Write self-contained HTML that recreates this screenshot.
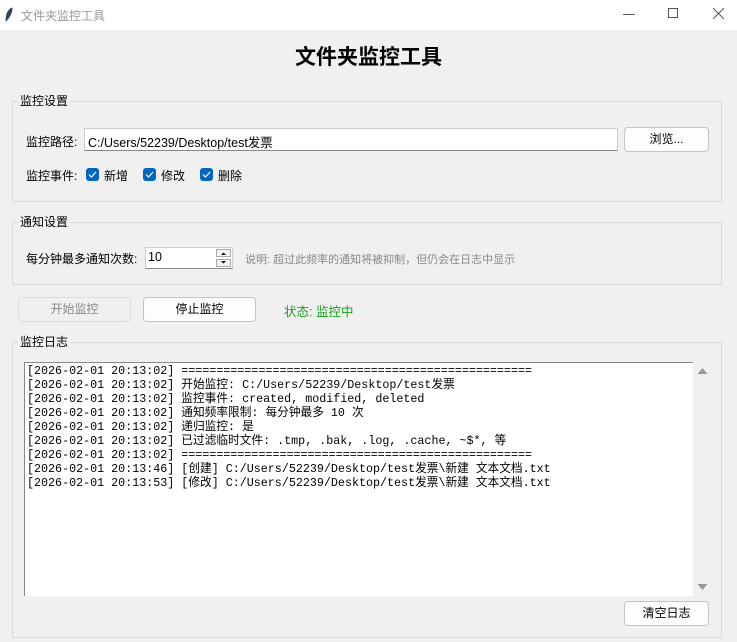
<!DOCTYPE html>
<html><head><meta charset="utf-8"><style>
*{margin:0;padding:0;box-sizing:border-box}
body{width:737px;height:642px;background:#f0f0f0;position:relative;overflow:hidden;font-family:"Liberation Sans","Microsoft YaHei","Noto Sans CJK SC",sans-serif;font-size:12px;color:#000}
.a{position:absolute;white-space:nowrap}
.grp{position:absolute;border:1px solid #d9d9d9}
.lg{position:absolute;background:#f0f0f0;padding:0 2px;font-size:12px;line-height:14px}
.btn{position:absolute;background:#fdfdfd;border:1px solid #c4c4c4;border-radius:4px;text-align:center;font-size:12px}
.cb{position:absolute;width:13px;height:13px;background:#0067c0;border-radius:3px}
.cb svg{position:absolute;left:2px;top:3px}
.log{font-family:"Liberation Mono","Noto Sans CJK SC",monospace;font-size:11.7px;line-height:14px;white-space:pre}
</style></head><body>
<div class="a" style="left:0;top:0;width:737px;height:30px;background:#fff"></div>
<svg class="a" style="left:4px;top:7px" width="10" height="16" viewBox="0 0 10 16"><path d="M8 1 C4 3 2 8 2 14 M2 14 C5 11 8 6 8 1 Z" fill="#345" stroke="#345" stroke-width="1"/></svg>
<div class="a" style="left:21px;top:7px;color:#999;font-size:12px">文件夹监控工具</div>
<div class="a" style="left:623px;top:14px;width:12px;height:1px;background:#555"></div>
<div class="a" style="left:668px;top:8px;width:10px;height:10px;border:1px solid #555"></div>
<svg class="a" style="left:713px;top:8px" width="11" height="11"><path d="M0 0L11 11M11 0L0 11" stroke="#555" stroke-width="1"/></svg>

<div class="a" style="left:0;top:41px;width:737px;text-align:center;font-size:21px;font-weight:bold">文件夹监控工具</div>

<div class="grp" style="left:12px;top:101px;width:710px;height:101px"></div>
<div class="lg" style="left:18px;top:94px">监控设置</div>
<div class="a" style="left:26px;top:133px">监控路径:</div>
<div class="a" style="left:84px;top:128px;width:534px;height:23px;background:#fff;border:1px solid #ccc;border-bottom:1px solid #888;padding:3px 3px;font-size:12.5px">C:/Users/52239/Desktop/test发票</div>
<div class="btn" style="left:624px;top:127px;width:85px;height:25px;line-height:23px">浏览...</div>
<div class="a" style="left:26px;top:167px">监控事件:</div>
<div class="cb" style="left:86px;top:168px"><svg width="9" height="7"><path d="M1 3.5L3.5 6L8 1" stroke="#fff" fill="none" stroke-width="1.2"/></svg></div>
<div class="a" style="left:104px;top:167px">新增</div>
<div class="cb" style="left:143px;top:168px"><svg width="9" height="7"><path d="M1 3.5L3.5 6L8 1" stroke="#fff" fill="none" stroke-width="1.2"/></svg></div>
<div class="a" style="left:161px;top:167px">修改</div>
<div class="cb" style="left:200px;top:168px"><svg width="9" height="7"><path d="M1 3.5L3.5 6L8 1" stroke="#fff" fill="none" stroke-width="1.2"/></svg></div>
<div class="a" style="left:218px;top:167px">删除</div>

<div class="grp" style="left:12px;top:222px;width:710px;height:63px"></div>
<div class="lg" style="left:18px;top:215px">通知设置</div>
<div class="a" style="left:26px;top:250px">每分钟最多通知次数:</div>
<div class="a" style="left:145px;top:247px;width:88px;height:22px;background:#fff;border:1px solid #ccc;border-bottom:1px solid #888;padding:2px 2px;font-size:12.5px">10</div>
<div class="a" style="left:216px;top:249px;width:15px;height:8px;border:1px solid #aaa;background:#f4f4f4"></div>
<div class="a" style="left:216px;top:259px;width:15px;height:8px;border:1px solid #aaa;background:#f4f4f4"></div>
<svg class="a" style="left:219px;top:250px" width="9" height="16"><path d="M2 5L4.5 2.5L7 5Z M2 11L4.5 13.5L7 11Z" fill="#000"/></svg>
<div class="a" style="left:245px;top:251px;color:#888;font-size:11px">说明: 超过此频率的通知将被抑制，但仍会在日志中显示</div>

<div class="btn" style="left:18px;top:297px;width:113px;height:25px;line-height:23px;color:#888;background:#f0f0f0;border-color:#ddd">开始监控</div>
<div class="btn" style="left:143px;top:297px;width:113px;height:25px;line-height:23px">停止监控</div>
<div class="a" style="left:284px;top:301px;color:#18a418;font-size:12.5px">状态: 监控中</div>

<div class="grp" style="left:12px;top:342px;width:710px;height:296px"></div>
<div class="lg" style="left:18px;top:335px">监控日志</div>
<div class="a" style="left:24px;top:362px;width:669px;height:234px;background:#fff;border-top:1px solid #888;border-left:1px solid #888"></div>
<svg class="a" style="left:697px;top:367px" width="11" height="8"><path d="M0.5 7L5.5 1L10.5 7Z" fill="#999"/></svg>
<svg class="a" style="left:697px;top:583px" width="11" height="8"><path d="M0.5 1L5.5 7L10.5 1Z" fill="#999"/></svg>
<div class="a log" style="left:27px;top:364px">[2026-02-01 20:13:02] ==================================================
[2026-02-01 20:13:02] 开始监控: C:/Users/52239/Desktop/test发票
[2026-02-01 20:13:02] 监控事件: created, modified, deleted
[2026-02-01 20:13:02] 通知频率限制: 每分钟最多 10 次
[2026-02-01 20:13:02] 递归监控: 是
[2026-02-01 20:13:02] 已过滤临时文件: .tmp, .bak, .log, .cache, ~$*, 等
[2026-02-01 20:13:02] ==================================================
[2026-02-01 20:13:46] [创建] C:/Users/52239/Desktop/test发票\新建 文本文档.txt
[2026-02-01 20:13:53] [修改] C:/Users/52239/Desktop/test发票\新建 文本文档.txt</div>
<div class="btn" style="left:624px;top:601px;width:85px;height:25px;line-height:23px">清空日志</div>
</body></html>
